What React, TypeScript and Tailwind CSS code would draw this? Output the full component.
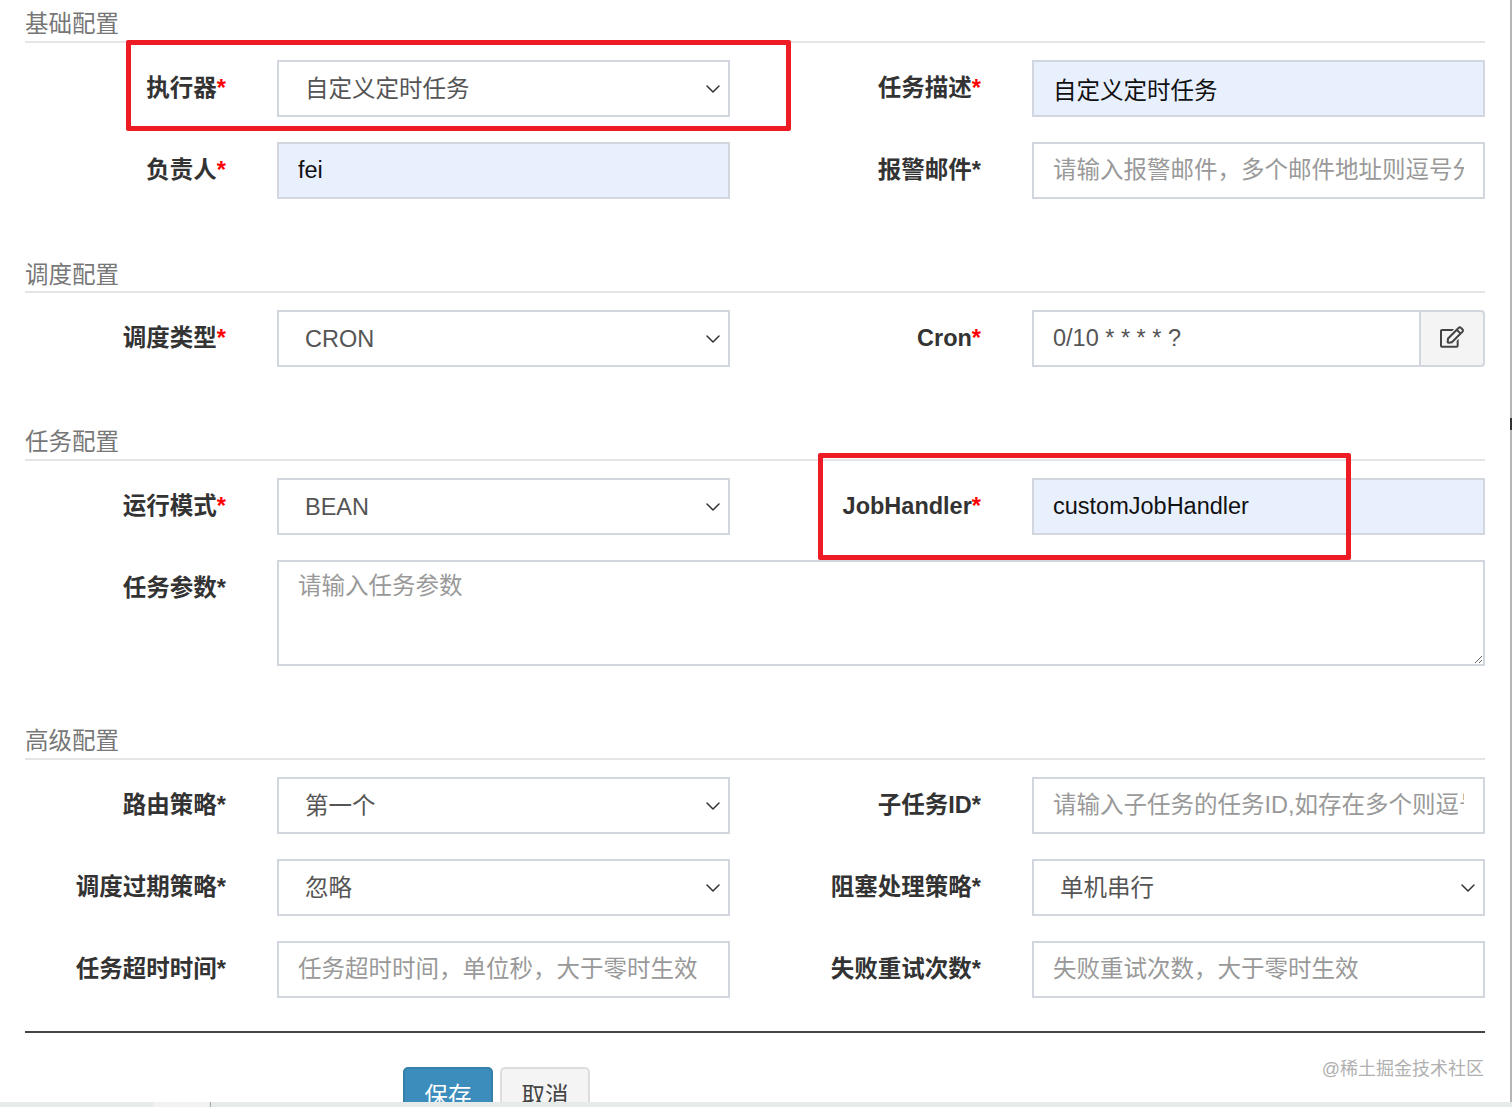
import { ChevronDown } from "lucide-react"
import { FaRegEdit } from "react-icons/fa"
import type { ReactNode } from "react"

const FONT = "font-['Liberation_Sans','Noto_Sans_CJK_SC',sans-serif]"
const BOX = "h-[57px] w-full border-2 border-[#d2d6de] text-[23.5px] outline-none"

function Legend({ title, className }: { title: string; className: string }) {
  return (
    <div className={`border-b-2 border-[#e5e5e5] text-[23.5px] leading-[34px] text-[#777] ${className}`}>
      {title}
    </div>
  )
}

function Label({ text, red }: { text: string; red?: boolean }) {
  return (
    <label className="h-[57px] text-right text-[23.5px] leading-[57px] font-bold text-[#333]">
      {text}
      <span className={red ? "text-[#f00]" : ""}>*</span>
    </label>
  )
}

function Select({ value }: { value: string }) {
  return (
    <div className={`${BOX} flex items-center justify-between bg-white pr-[3px] pl-[26px] text-[#555]`}>
      <span className="pt-[2px]">{value}</span>
      <ChevronDown size={24} strokeWidth={1.5} className="text-[#333]" />
    </div>
  )
}

function Input({ value, placeholder, filled }: { value?: string; placeholder?: string; filled?: boolean }) {
  return (
    <input
      readOnly
      value={value ?? ""}
      placeholder={placeholder}
      className={`${BOX} px-[19px] placeholder:text-[#999] ${filled ? "bg-[#e8f0fe] text-[#111]" : "bg-white text-[#555]"}`}
    />
  )
}

function Row({ children, className = "" }: { children: ReactNode; className?: string }) {
  return (
    <div className={`grid grid-cols-[201px_453px_200px_453px] gap-x-[51px] ${className}`}>{children}</div>
  )
}

export default function App() {
  return (
    <div className={`relative h-[1107px] w-[1512px] overflow-hidden bg-white ${FONT}`}>
      <form className="pr-[27px] pl-[25px]">
        <Legend title="基础配置" className="h-[43px] pt-[7px]" />
        <Row className="mt-[17px]">
          <Label text="执行器" red />
          <Select value="自定义定时任务" />
          <Label text="任务描述" red />
          <Input value="自定义定时任务" filled />
        </Row>
        <Row className="mt-[25px]">
          <Label text="负责人" red />
          <Input value="fei" filled />
          <Label text="报警邮件" />
          <Input placeholder="请输入报警邮件，多个邮件地址则逗号分隔" />
        </Row>

        <Legend title="调度配置" className="mt-[58px] h-[36px] pt-[1px]" />
        <Row className="mt-[17px]">
          <Label text="调度类型" red />
          <Select value="CRON" />
          <Label text="Cron" red />
          <div className="flex">
            <input
              readOnly
              value="0/10 * * * * ?"
              className={`${BOX} min-w-0 flex-1 border-r-0 bg-white px-[19px] text-[#555]`}
            />
            <span className="flex h-[57px] w-[66px] items-center justify-center rounded-r-[4px] border-2 border-[#d2d6de] bg-[#f4f4f4] pb-[3px] text-[#444]">
              <FaRegEdit size={24} />
            </span>
          </div>
        </Row>

        <Legend title="任务配置" className="mt-[58px] h-[36px]" />
        <Row className="mt-[17px]">
          <Label text="运行模式" red />
          <Select value="BEAN" />
          <Label text="JobHandler" red />
          <Input value="customJobHandler" filled />
        </Row>
        <Row className="mt-[25px]">
          <Label text="任务参数" />
          <textarea
            readOnly
            placeholder="请输入任务参数"
            className="col-span-3 h-[106px] border-2 border-[#d2d6de] bg-white px-[19px] py-[6px] text-[23.5px] leading-[36px] outline-none placeholder:text-[#999]"
          />
        </Row>

        <Legend title="高级配置" className="mt-[58px] h-[36px]" />
        <Row className="mt-[17px]">
          <Label text="路由策略" />
          <Select value="第一个" />
          <Label text="子任务ID" />
          <Input placeholder="请输入子任务的任务ID,如存在多个则逗号分隔" />
        </Row>
        <Row className="mt-[25px]">
          <Label text="调度过期策略" />
          <Select value="忽略" />
          <Label text="阻塞处理策略" />
          <Select value="单机串行" />
        </Row>
        <Row className="mt-[25px]">
          <Label text="任务超时时间" />
          <Input placeholder="任务超时时间，单位秒，大于零时生效" />
          <Label text="失败重试次数" />
          <Input placeholder="失败重试次数，大于零时生效" />
        </Row>

        <div className="mt-[33px] h-[2px] bg-[#444]" />

        <div className="mt-[34px] flex gap-[7px] pl-[378px]">
          <button type="button" className="h-[60px] w-[90px] rounded-[5px] border-2 border-[#367fa9] bg-[#3c8dbc] text-[23.5px] text-white">
            保存
          </button>
          <button type="button" className="h-[60px] w-[90px] rounded-[5px] border-2 border-[#ddd] bg-[#f4f4f4] text-[23.5px] text-[#444]">
            取消
          </button>
        </div>
      </form>

      {/* annotations on top of the screenshot */}
      <div className="absolute top-[40px] left-[126px] h-[91px] w-[665px] rounded-[2px] border-[5px] border-[#ed1c24]" />
      <div className="absolute top-[453px] left-[818px] h-[107px] w-[533px] rounded-[2px] border-[5px] border-[#ed1c24]" />
      <div className="absolute top-[1057px] right-[28px] text-[18px] leading-[24px] text-[#b0b0b0]">@稀土掘金技术社区</div>

      {/* window edge and scrollbar strip */}
      <div className="absolute top-0 right-0 h-full w-[2px] bg-[#b5b5b5]" />
      <div className="absolute top-[418px] right-0 h-[12px] w-[2px] bg-[#333]" />
      <div className="absolute right-0 bottom-0 left-0 flex h-[5px] bg-[#e6ebe9]">
        <div className="ml-[153px] w-[56px] bg-[#f0f3f2]" />
        <div className="ml-[1px] w-[1px] bg-[#aaa]" />
      </div>
    </div>
  )
}
